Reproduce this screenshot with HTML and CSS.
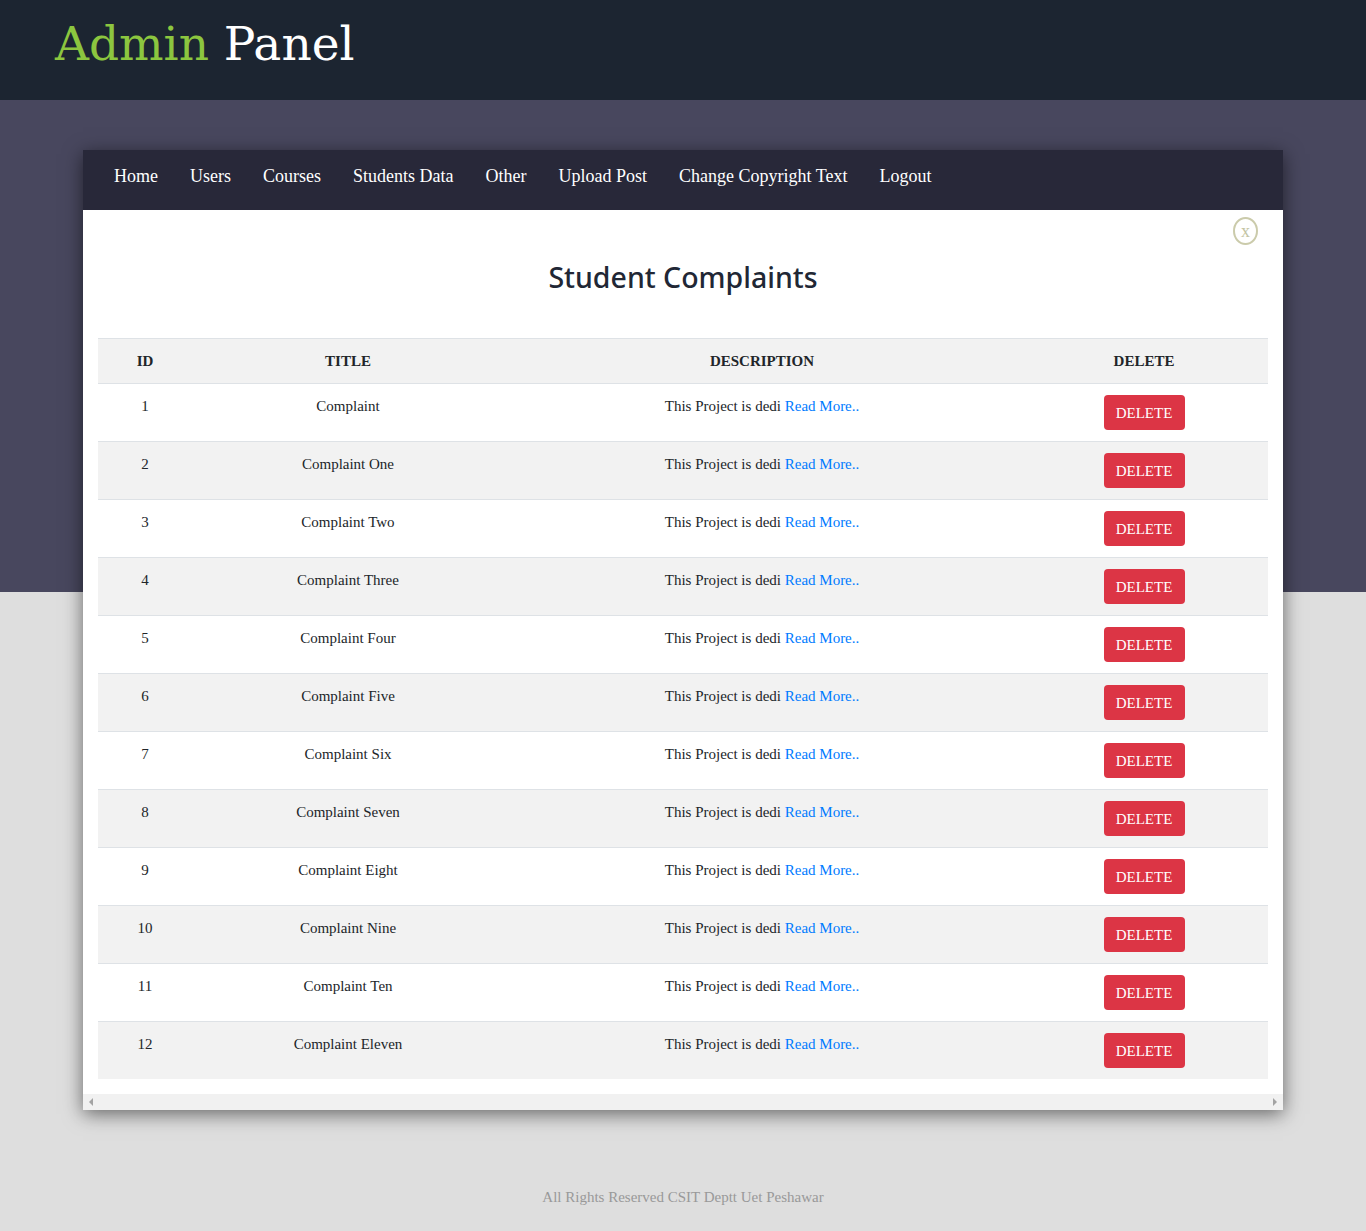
FILE: index.html
```html
<!DOCTYPE html>
<html>
<head>
<meta charset="utf-8">
<title>Admin Panel</title>
<link rel="stylesheet" href="styles.css">
</head>
<body>
<header class="topbar">
  <h1 class="brand"><span class="brand-green">Admin</span> Panel</h1>
</header>
<main class="stage">
  <section class="card">
    <nav class="nav">
      <a href="#">Home</a>
      <a href="#">Users</a>
      <a href="#">Courses</a>
      <a href="#">Students Data</a>
      <a href="#">Other</a>
      <a href="#">Upload Post</a>
      <a href="#">Change Copyright Text</a>
      <a href="#">Logout</a>
    </nav>
    <div class="card-body">
      <button class="close">x</button>
      <h2 class="title">Student Complaints</h2>
      <table class="table">
        <colgroup>
          <col class="c1"><col class="c2"><col class="c3"><col class="c4">
        </colgroup>
        <thead>
          <tr><th>ID</th><th>TITLE</th><th>DESCRIPTION</th><th>DELETE</th></tr>
        </thead>
        <tbody>
          <tr><td>1</td><td>Complaint</td><td>This Project is dedi <a href="#">Read More..</a></td><td><button class="del">DELETE</button></td></tr>
          <tr><td>2</td><td>Complaint One</td><td>This Project is dedi <a href="#">Read More..</a></td><td><button class="del">DELETE</button></td></tr>
          <tr><td>3</td><td>Complaint Two</td><td>This Project is dedi <a href="#">Read More..</a></td><td><button class="del">DELETE</button></td></tr>
          <tr><td>4</td><td>Complaint Three</td><td>This Project is dedi <a href="#">Read More..</a></td><td><button class="del">DELETE</button></td></tr>
          <tr><td>5</td><td>Complaint Four</td><td>This Project is dedi <a href="#">Read More..</a></td><td><button class="del">DELETE</button></td></tr>
          <tr><td>6</td><td>Complaint Five</td><td>This Project is dedi <a href="#">Read More..</a></td><td><button class="del">DELETE</button></td></tr>
          <tr><td>7</td><td>Complaint Six</td><td>This Project is dedi <a href="#">Read More..</a></td><td><button class="del">DELETE</button></td></tr>
          <tr><td>8</td><td>Complaint Seven</td><td>This Project is dedi <a href="#">Read More..</a></td><td><button class="del">DELETE</button></td></tr>
          <tr><td>9</td><td>Complaint Eight</td><td>This Project is dedi <a href="#">Read More..</a></td><td><button class="del">DELETE</button></td></tr>
          <tr><td>10</td><td>Complaint Nine</td><td>This Project is dedi <a href="#">Read More..</a></td><td><button class="del">DELETE</button></td></tr>
          <tr><td>11</td><td>Complaint Ten</td><td>This Project is dedi <a href="#">Read More..</a></td><td><button class="del">DELETE</button></td></tr>
          <tr><td>12</td><td>Complaint Eleven</td><td>This Project is dedi <a href="#">Read More..</a></td><td><button class="del">DELETE</button></td></tr>
        </tbody>
      </table>
    </div>
    <div class="hscroll">
      <span class="arrow-left"></span>
      <span class="arrow-right"></span>
    </div>
  </section>
</main>
<footer class="footer">All Rights Reserved CSIT Deptt Uet Peshawar</footer>
</body>
</html>
```

FILE: styles.css
```css
* { box-sizing: border-box; }
html, body { margin: 0; padding: 0; }
body {
  background: #dedede;
  font-family: "Liberation Serif", "Times New Roman", serif;
  color: #212529;
}
.topbar {
  height: 100px;
  background: #1c2531;
  padding: 0 0 0 55px;
  display: flex;
  align-items: center;
}
.brand {
  margin: 0;
  font-family: "DejaVu Serif", serif;
  font-weight: normal;
  font-size: 47px;
  line-height: 1;
  color: #fff;
  position: relative;
  top: -7px;
}
.brand-green { color: #8cc63f; }

.stage {
  background: linear-gradient(#48475e 0, #48475e 492px, #dedede 492px);
  padding-top: 50px;
  display: flex;
  justify-content: center;
}
.card {
  width: 1200px;
  background: #fff;
  box-shadow: 0 4px 18px rgba(0,0,0,0.55);
}
.nav {
  height: 60px;
  background: #282839;
  display: flex;
  align-items: center;
  padding-left: 31px;
  padding-bottom: 8px;
  gap: 32px;
}
.nav a {
  color: #fff;
  text-decoration: none;
  font-size: 18px;
  line-height: 1;
}
.card-body {
  position: relative;
  padding: 49px 15px 15px;
}
.close {
  position: absolute;
  top: 7px;
  right: 25px;
  width: 25px;
  height: 28px;
  border: 2px solid #cbcbab;
  border-radius: 50%;
  background: #fff;
  color: #c4c4a4;
  font-family: "Liberation Serif", serif;
  font-size: 18px;
  line-height: 20px;
  padding: 0;
}
.title {
  margin: 0 0 43px;
  text-align: center;
  font-family: "Noto Sans", "Open Sans", sans-serif;
  font-weight: 500;
  font-size: 28.5px;
  line-height: 36px;
  color: #212735;
}
.table {
  width: 1170px;
  border-collapse: collapse;
  font-size: 15px;
}
.c1 { width: 94px; }
.c2 { width: 312px; }
.c3 { width: 516px; }
.c4 { width: 248px; }
.table th {
  background: #f2f2f2;
  border-top: 1px solid #dee2e6;
  padding: 12px 0 11px;
  line-height: 21px;
  font-weight: bold;
  text-align: center;
}
.table td {
  border-top: 1px solid #dee2e6;
  padding: 11px 0;
  line-height: 21px;
  text-align: center;
  vertical-align: top;
}
.table td:not(:last-child) { padding-top: 12px; padding-bottom: 10px; }
.table tbody tr:nth-child(even) td { background: #f2f2f2; }
.table a { color: #007bff; text-decoration: none; }
.del {
  width: 81px;
  height: 35px;
  background: #dc3545;
  color: #fff;
  border: 0;
  border-radius: 4px;
  font-family: "Liberation Serif", serif;
  font-size: 15px;
  line-height: 35px;
  padding: 1px 0 0;
  display: inline-block;
  vertical-align: top;
}
.hscroll {
  height: 16px;
  background: #f1f1f1;
  display: flex;
  justify-content: space-between;
  align-items: center;
  padding: 0 6px;
}
.arrow-left, .arrow-right {
  width: 0; height: 0;
  border-top: 4px solid transparent;
  border-bottom: 4px solid transparent;
}
.arrow-left { border-right: 4px solid #a3a3a3; }
.arrow-right { border-left: 4px solid #a3a3a3; }
.footer {
  text-align: center;
  color: #999;
  font-size: 15px;
  line-height: 20px;
  padding: 77px 0 24px;
}
```
